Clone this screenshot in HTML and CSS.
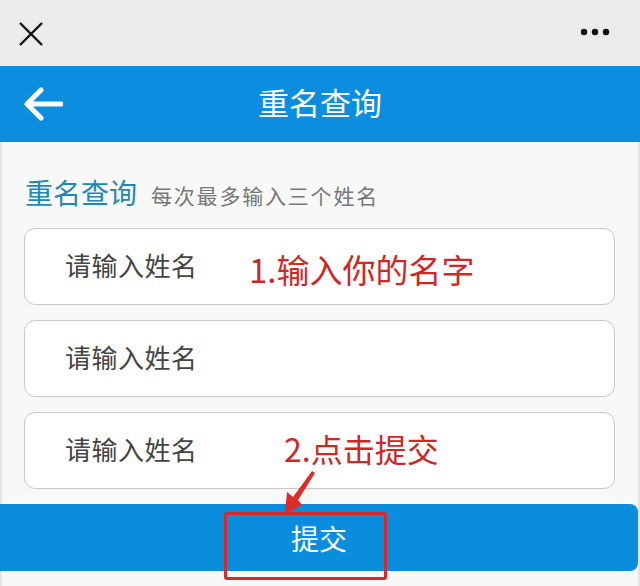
FILE: index.html
```html
<!DOCTYPE html>
<html lang="zh">
<head>
<meta charset="utf-8">
<link rel="stylesheet" href="styles.css">
</head>
<body>
<div class="page">
  <div class="topbar">
    <svg class="close" width="26" height="26" viewBox="0 0 26 26"><path d="M2 2 L24 24 M24 2 L2 24" stroke="#111" stroke-width="2.4" fill="none"/></svg>
    <svg class="more" width="30" height="8" viewBox="0 0 30 8"><circle cx="4" cy="4" r="3.2" fill="#111"/><circle cx="15" cy="4" r="3.2" fill="#111"/><circle cx="26" cy="4" r="3.2" fill="#111"/></svg>
  </div>
  <div class="header">
    <svg class="back" width="40" height="34" viewBox="0 0 40 34"><path d="M38 17 H5 M18 3 L4 17 L18 31" stroke="#fff" stroke-width="5" fill="none" stroke-linecap="round" stroke-linejoin="round"/></svg>
    <div class="title">重名查询</div>
  </div>
  <div class="content">
    <div class="heading"><span class="h-main">重名查询</span><span class="h-sub">每次最多输入三个姓名</span></div>
    <div class="field"><span class="ph">请输入姓名</span><span class="note note1">1.输入你的名字</span></div>
    <div class="field"><span class="ph">请输入姓名</span></div>
    <div class="field"><span class="ph">请输入姓名</span><span class="note note2">2.点击提交</span></div>
    <div class="submit">提交</div>
    <div class="redbox"></div>
    <svg class="arrow" width="40" height="50" viewBox="0 0 40 50"><path d="M32 4 L35 6 L18 33 L22 38 L5 47 L7 25 L13 30 Z" fill="#e02a2a"/></svg>
  </div>
</div>
</body>
</html>
```
FILE: styles.css
```css
html, body { margin: 0; padding: 0; }
body { width: 640px; height: 586px; overflow: hidden; background: #ececec; font-family: "Noto Sans CJK SC", "Noto Sans", sans-serif; }
.page { width: 640px; height: 586px; display: flex; flex-direction: column; }
.topbar { height: 66px; background: #ececec; display: flex; align-items: center; justify-content: space-between; padding: 0 30px 0 18px; box-sizing: border-box; }
.topbar .close { margin-top: 2px; }
.topbar .more { margin-top: -2px; }
.header { height: 76px; background: #0b8de0; display: flex; align-items: center; position: relative; }
.back { margin-left: 23px; }
.title { position: absolute; left: 0; right: 0; text-align: center; color: #fff; font-size: 31px; line-height: 76px; top: -2px; }
.content { flex: 1; background: #f8f8f8; position: relative; padding: 30px 25px 0 24px; border-left: 2px solid #e4e4e4; border-right: 2px solid #e4e4e4; box-sizing: border-box; display: flex; flex-direction: column; }
.heading { display: flex; align-items: baseline; height: 56px; }
.h-main { color: #1f88b3; font-size: 28px; line-height: 40px; margin-left: -1px; }
.h-sub { color: #777; font-size: 21px; letter-spacing: 1.8px; margin-left: 14px; }
.field { height: 77px; border: 1px solid #c8c8c8; border-radius: 11px; background: #fff; box-sizing: border-box; margin-bottom: 15px; display: flex; align-items: center; position: relative; margin-left: -2px; margin-right: -2px; }
.ph { color: #444; font-size: 26px; letter-spacing: 0.5px; margin-left: 40px; margin-top: -4px; }
.note { position: absolute; color: #cf2626; font-size: 33px; line-height: 40px; }
.note1 { left: 224px; top: 20px; }
.note2 { left: 259px; top: 15px; font-size: 32px; }
.submit { margin: 0 -25px 0 -26px; height: 67px; background: #0a8ddd; border-radius: 0 8px 8px 0; color: #fff; font-size: 28px; display: flex; align-items: center; justify-content: center; }
.redbox { position: absolute; left: 222px; top: 370px; width: 157px; height: 62px; border: 3px solid #d52a2a; border-radius: 3px; }
.arrow { position: absolute; left: 278px; top: 325px; }
```
